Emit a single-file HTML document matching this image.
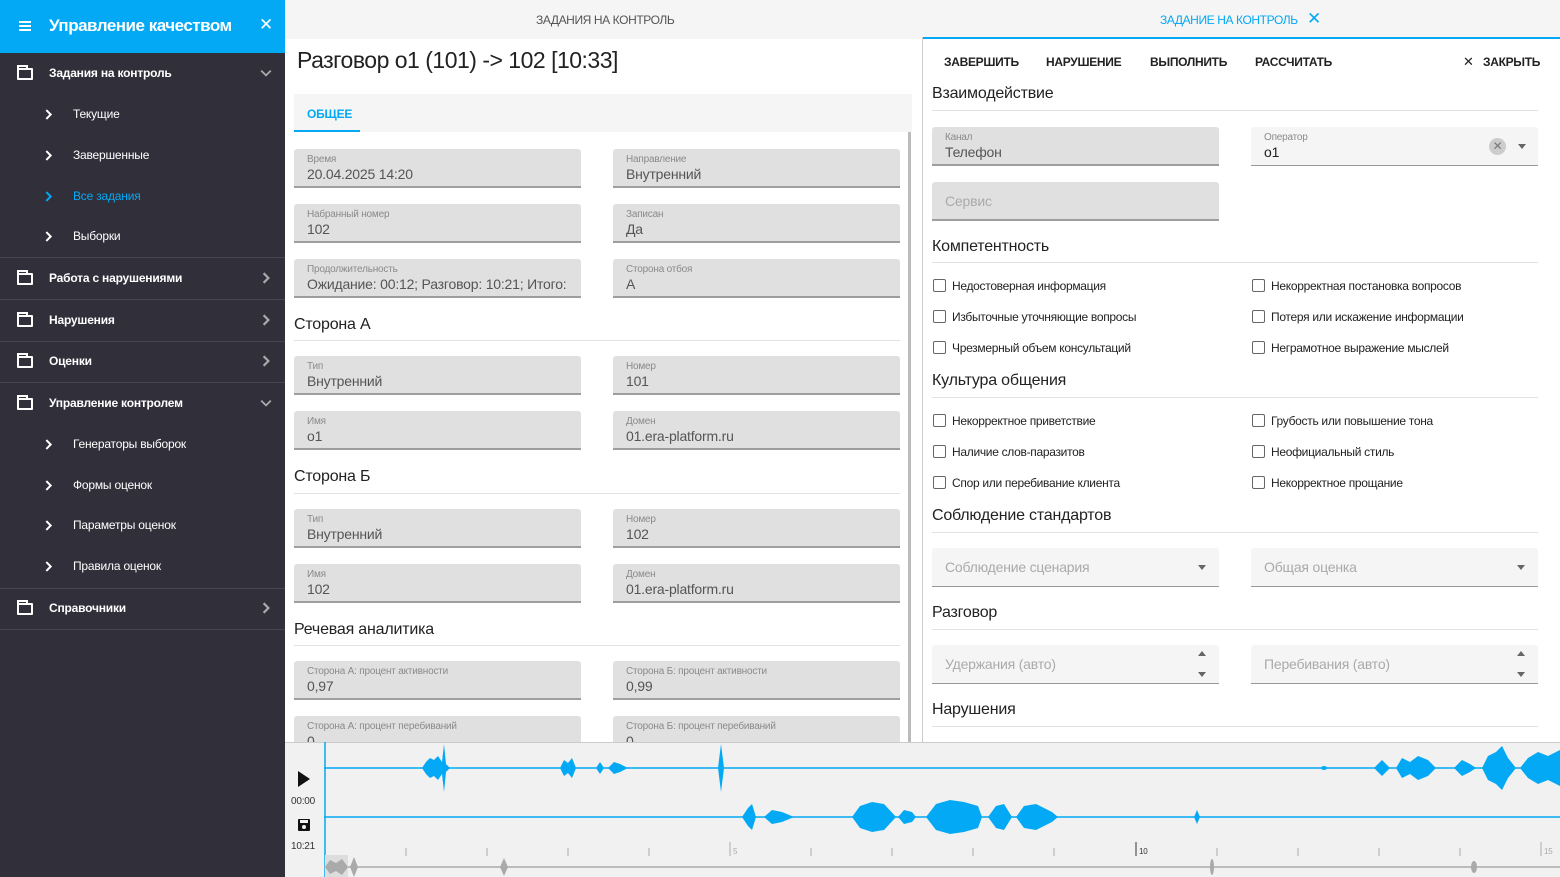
<!DOCTYPE html>
<html><head><meta charset="utf-8"><style>
*{box-sizing:border-box;margin:0;padding:0}
body{width:1560px;height:877px;position:relative;overflow:hidden;font-family:"Liberation Sans","Noto Sans CJK SC",sans-serif;background:#fff;color:#222;letter-spacing:-0.2px}
.a{position:absolute}
#sb{left:0;top:0;width:285px;height:877px;background:#302f3a}
#hd{left:0;top:0;width:285px;height:53px;background:#03a9f4;color:#fff}
.it{position:absolute;left:0;width:285px;color:#fff;font-size:12px;font-weight:bold;line-height:16px}
.sub{position:absolute;left:73px;color:#fff;font-size:12px}
.sep{position:absolute;left:0;width:285px;height:1px;background:#45444f}
.fold{position:absolute;left:17px;width:16px;height:12px;border:2px solid #fff;border-radius:1px}
.fold:before{content:"";position:absolute;left:-2px;top:-5px;width:7px;height:3px;border:2px solid #fff;border-bottom:none}
.ch{position:absolute}
.f{position:absolute;background:#e0e0e0;border-bottom:2px solid #9e9e9e;border-radius:3px 3px 0 0;height:39px}
.f .l{position:absolute;left:13px;top:5px;font-size:10px;color:#8a8a8a}
.f .v{position:absolute;left:13px;top:17px;font-size:14px;color:#555;white-space:nowrap;overflow:hidden;right:10px}
.f.w{background:#f5f5f5;border-bottom:1px solid #999}
.f.w .v{color:#222}
.ph{position:absolute;left:13px;top:11px;font-size:14px;color:#aaa}
.h{position:absolute;font-size:16px;color:#222}
.ln{position:absolute;height:1px;background:#e3e3e3}
.cb{position:absolute;font-size:12px;color:#222;padding-left:19px;line-height:14px;letter-spacing:-0.3px}
.cb:before{content:"";position:absolute;left:0;top:0;width:11px;height:11px;border:1.5px solid #666;border-radius:2px}
.btn{position:absolute;top:55px;font-size:12px;font-weight:bold;color:#222;letter-spacing:-0.3px}
.arr{position:absolute;width:0;height:0;border-left:4px solid transparent;border-right:4px solid transparent;border-top:5px solid #666}
.arru{position:absolute;width:0;height:0;border-left:4px solid transparent;border-right:4px solid transparent;border-bottom:5px solid #666}
</style></head><body>
<svg width="0" height="0" style="position:absolute"><defs>
<symbol id="r" viewBox="0 0 10 10"><path d="M3 1 L7 5 L3 9" fill="none" stroke-width="1.8"/></symbol>
<symbol id="d" viewBox="0 0 10 10"><path d="M1 3 L5 7 L9 3" fill="none" stroke-width="1.5"/></symbol>
</defs></svg>
<div id="sb" class="a"></div>
<div id="hd" class="a">
 <div class="a" style="left:19px;top:21px;width:12px;height:2px;background:#fff;box-shadow:0 4px #fff,0 8px #fff"></div>
 <div class="a" style="left:49px;top:16px;font-size:17px;font-weight:bold;letter-spacing:-0.5px">Управление качеством</div>
 <div class="a" style="left:259px;top:15px;font-size:17px">✕</div>
</div>
<div class="fold" style="top:68px"></div><div class="it" style="top:65px;left:49px">Задания на контроль</div><svg class="ch" style="left:260px;top:67px" width="12" height="12" stroke="#aaa"><use href="#d"/></svg>
<svg class="ch" style="left:43px;top:109px" width="11" height="11" stroke="#fff"><use href="#r"/></svg><div class="sub" style="top:107px">Текущие</div>
<svg class="ch" style="left:43px;top:150px" width="11" height="11" stroke="#fff"><use href="#r"/></svg><div class="sub" style="top:148px">Завершенные</div>
<svg class="ch" style="left:43px;top:191px" width="11" height="11" stroke="#03a9f4"><use href="#r"/></svg><div class="sub" style="top:189px;color:#03a9f4">Все задания</div>
<svg class="ch" style="left:43px;top:231px" width="11" height="11" stroke="#fff"><use href="#r"/></svg><div class="sub" style="top:229px">Выборки</div>
<div class="sep" style="top:257px"></div>
<div class="fold" style="top:273px"></div><div class="it" style="top:270px;left:49px">Работа с нарушениями</div><svg class="ch" style="left:260px;top:272px" width="12" height="12" stroke="#aaa"><use href="#r"/></svg>
<div class="sep" style="top:299px"></div>
<div class="fold" style="top:315px"></div><div class="it" style="top:312px;left:49px">Нарушения</div><svg class="ch" style="left:260px;top:314px" width="12" height="12" stroke="#aaa"><use href="#r"/></svg>
<div class="sep" style="top:341px"></div>
<div class="fold" style="top:356px"></div><div class="it" style="top:353px;left:49px">Оценки</div><svg class="ch" style="left:260px;top:355px" width="12" height="12" stroke="#aaa"><use href="#r"/></svg>
<div class="sep" style="top:382px"></div>
<div class="fold" style="top:398px"></div><div class="it" style="top:395px;left:49px">Управление контролем</div><svg class="ch" style="left:260px;top:397px" width="12" height="12" stroke="#aaa"><use href="#d"/></svg>
<svg class="ch" style="left:43px;top:439px" width="11" height="11" stroke="#fff"><use href="#r"/></svg><div class="sub" style="top:437px">Генераторы выборок</div>
<svg class="ch" style="left:43px;top:480px" width="11" height="11" stroke="#fff"><use href="#r"/></svg><div class="sub" style="top:478px">Формы оценок</div>
<svg class="ch" style="left:43px;top:520px" width="11" height="11" stroke="#fff"><use href="#r"/></svg><div class="sub" style="top:518px">Параметры оценок</div>
<svg class="ch" style="left:43px;top:561px" width="11" height="11" stroke="#fff"><use href="#r"/></svg><div class="sub" style="top:559px">Правила оценок</div>
<div class="sep" style="top:588px"></div>
<div class="fold" style="top:603px"></div><div class="it" style="top:600px;left:49px">Справочники</div><svg class="ch" style="left:260px;top:602px" width="12" height="12" stroke="#aaa"><use href="#r"/></svg>
<div class="sep" style="top:629px"></div>

<div class="a" style="left:285px;top:0;width:1275px;height:39px;background:#f5f5f5"></div>
<div class="a" style="left:536px;top:13px;font-size:12px;color:#555;letter-spacing:-0.4px">ЗАДАНИЯ НА КОНТРОЛЬ</div>
<div class="a" style="left:1160px;top:13px;font-size:12px;color:#03a9f4;letter-spacing:-0.4px">ЗАДАНИЕ НА КОНТРОЛЬ</div>
<div class="a" style="left:1307px;top:9px;font-size:17px;color:#03a9f4">✕</div>
<div class="a" style="left:922px;top:37px;width:638px;height:2px;background:#03a9f4"></div>
<div class="a" style="left:922px;top:37px;width:1px;height:705px;background:#ccc"></div>

<div class="a" style="left:297px;top:47px;font-size:23px;color:#222;letter-spacing:-0.5px">Разговор o1 (101) -&gt; 102 [10:33]</div>
<div class="a" style="left:294px;top:94px;width:618px;height:38px;background:#f5f5f5"></div>
<div class="a" style="left:307px;top:107px;font-size:12px;font-weight:bold;color:#03a9f4">ОБЩЕЕ</div>
<div class="a" style="left:294px;top:130px;width:66px;height:2px;background:#03a9f4"></div>
<div class="a" style="left:908px;top:132px;width:3px;height:610px;background:#bbb"></div>

<div class="f" style="left:294px;top:149px;width:287px"><div class="l">Время</div><div class="v">20.04.2025 14:20</div></div>
<div class="f" style="left:613px;top:149px;width:287px"><div class="l">Направление</div><div class="v">Внутренний</div></div>
<div class="f" style="left:294px;top:204px;width:287px"><div class="l">Набранный номер</div><div class="v">102</div></div>
<div class="f" style="left:613px;top:204px;width:287px"><div class="l">Записан</div><div class="v">Да</div></div>
<div class="f" style="left:294px;top:259px;width:287px"><div class="l">Продолжительность</div><div class="v">Ожидание: 00:12; Разговор: 10:21; Итого: 10:33</div></div>
<div class="f" style="left:613px;top:259px;width:287px"><div class="l">Сторона отбоя</div><div class="v">A</div></div>
<div class="h" style="left:294px;top:316px">Сторона А</div><div class="ln" style="left:294px;top:340px;width:606px"></div>
<div class="f" style="left:294px;top:356px;width:287px"><div class="l">Тип</div><div class="v">Внутренний</div></div>
<div class="f" style="left:613px;top:356px;width:287px"><div class="l">Номер</div><div class="v">101</div></div>
<div class="f" style="left:294px;top:411px;width:287px"><div class="l">Имя</div><div class="v">o1</div></div>
<div class="f" style="left:613px;top:411px;width:287px"><div class="l">Домен</div><div class="v">01.era-platform.ru</div></div>
<div class="h" style="left:294px;top:468px">Сторона Б</div><div class="ln" style="left:294px;top:493px;width:606px"></div>
<div class="f" style="left:294px;top:509px;width:287px"><div class="l">Тип</div><div class="v">Внутренний</div></div>
<div class="f" style="left:613px;top:509px;width:287px"><div class="l">Номер</div><div class="v">102</div></div>
<div class="f" style="left:294px;top:564px;width:287px"><div class="l">Имя</div><div class="v">102</div></div>
<div class="f" style="left:613px;top:564px;width:287px"><div class="l">Домен</div><div class="v">01.era-platform.ru</div></div>
<div class="h" style="left:294px;top:621px">Речевая аналитика</div><div class="ln" style="left:294px;top:645px;width:606px"></div>
<div class="f" style="left:294px;top:661px;width:287px"><div class="l">Сторона А: процент активности</div><div class="v">0,97</div></div>
<div class="f" style="left:613px;top:661px;width:287px"><div class="l">Сторона Б: процент активности</div><div class="v">0,99</div></div>
<div class="f" style="left:294px;top:716px;width:287px;height:26px;border:none;overflow:hidden"><div class="l">Сторона А: процент перебиваний</div><div class="v">0</div></div>
<div class="f" style="left:613px;top:716px;width:287px;height:26px;border:none;overflow:hidden"><div class="l">Сторона Б: процент перебиваний</div><div class="v">0</div></div>

<div class="btn" style="left:944px">ЗАВЕРШИТЬ</div>
<div class="btn" style="left:1046px">НАРУШЕНИЕ</div>
<div class="btn" style="left:1150px">ВЫПОЛНИТЬ</div>
<div class="btn" style="left:1255px">РАССЧИТАТЬ</div>
<div class="btn" style="left:1463px;font-weight:normal;top:54px;font-size:13px">✕</div>
<div class="btn" style="left:1483px">ЗАКРЫТЬ</div>
<div class="h" style="left:932px;top:85px">Взаимодействие</div><div class="ln" style="left:932px;top:110px;width:606px"></div>
<div class="f" style="left:932px;top:127px;width:287px"><div class="l">Канал</div><div class="v">Телефон</div></div>
<div class="f w" style="left:1251px;top:127px;width:287px"><div class="l">Оператор</div><div class="v">o1</div>
 <div class="a" style="left:238px;top:11px;width:17px;height:17px;border-radius:50%;background:#ccc;color:#777;font-size:12px;text-align:center;line-height:17px">✕</div>
 <div class="arr" style="left:267px;top:17px"></div></div>
<div class="f" style="left:932px;top:182px;width:287px"><div class="ph">Сервис</div></div>
<div class="h" style="left:932px;top:238px">Компетентность</div><div class="ln" style="left:932px;top:262px;width:606px"></div>
<div class="cb" style="left:933px;top:279px">Недостоверная информация</div>
<div class="cb" style="left:933px;top:310px">Избыточные уточняющие вопросы</div>
<div class="cb" style="left:933px;top:341px">Чрезмерный объем консультаций</div>
<div class="cb" style="left:1252px;top:279px">Некорректная постановка вопросов</div>
<div class="cb" style="left:1252px;top:310px">Потеря или искажение информации</div>
<div class="cb" style="left:1252px;top:341px">Неграмотное выражение мыслей</div>
<div class="h" style="left:932px;top:372px">Культура общения</div><div class="ln" style="left:932px;top:397px;width:606px"></div>
<div class="cb" style="left:933px;top:414px">Некорректное приветствие</div>
<div class="cb" style="left:933px;top:445px">Наличие слов-паразитов</div>
<div class="cb" style="left:933px;top:476px">Спор или перебивание клиента</div>
<div class="cb" style="left:1252px;top:414px">Грубость или повышение тона</div>
<div class="cb" style="left:1252px;top:445px">Неофициальный стиль</div>
<div class="cb" style="left:1252px;top:476px">Некорректное прощание</div>
<div class="h" style="left:932px;top:507px">Соблюдение стандартов</div><div class="ln" style="left:932px;top:532px;width:606px"></div>
<div class="f w" style="left:932px;top:548px;width:287px"><div class="ph">Соблюдение сценария</div><div class="arr" style="left:266px;top:17px"></div></div>
<div class="f w" style="left:1251px;top:548px;width:287px"><div class="ph">Общая оценка</div><div class="arr" style="left:266px;top:17px"></div></div>
<div class="h" style="left:932px;top:604px">Разговор</div><div class="ln" style="left:932px;top:629px;width:606px"></div>
<div class="f w" style="left:932px;top:645px;width:287px"><div class="ph">Удержания (авто)</div><div class="arru" style="left:266px;top:6px"></div><div class="arr" style="left:266px;top:27px"></div></div>
<div class="f w" style="left:1251px;top:645px;width:287px"><div class="ph">Перебивания (авто)</div><div class="arru" style="left:266px;top:6px"></div><div class="arr" style="left:266px;top:27px"></div></div>
<div class="h" style="left:932px;top:701px">Нарушения</div><div class="ln" style="left:932px;top:726px;width:606px"></div>

<div class="a" style="left:285px;top:742px;width:1275px;height:135px;background:#f1f1f1;border-top:1px solid #ccc"></div>
<div class="a" style="left:298px;top:771px;width:0;height:0;border-top:8px solid transparent;border-bottom:8px solid transparent;border-left:12px solid #111"></div>
<div class="a" style="left:291px;top:796px;font-size:10px;color:#333">00:00</div>
<div class="a" style="left:298px;top:819px;width:12px;height:12px;background:#111;border-radius:1px"><div class="a" style="left:2px;top:1px;width:8px;height:3px;background:#f1f1f1"></div><div class="a" style="left:4px;top:6px;width:4px;height:4px;background:#f1f1f1;border-radius:50%"></div></div>
<div class="a" style="left:291px;top:841px;font-size:10px;color:#333">10:21</div>
<svg class="a" style="left:324px;top:742px" width="1236" height="135">
<line x1="1" y1="0" x2="1" y2="135" stroke="#03a9f4" stroke-width="1.5"/>
<line x1="0" y1="26" x2="1236" y2="26" stroke="#03a9f4" stroke-width="1.5"/>
<line x1="0" y1="75" x2="1236" y2="75" stroke="#03a9f4" stroke-width="1.5"/>
<g fill="#03a9f4">
<path d="M98 26 L102 20 L106 16 L110 18 L114 14 L118 20 L120 2 L122 22 L126 26 L122 30 L120 50 L118 32 L114 38 L110 34 L106 36 L102 32 Z"/>
<path d="M236 26 L240 18 L244 21 L248 16 L252 26 L248 36 L244 31 L240 34 Z"/>
<path d="M272 26 L276 20 L280 26 L276 32 Z"/><path d="M284 26 L290 20 L296 22 L304 26 L296 30 L290 32 Z"/>
<path d="M394 26 L397 2 L400 26 L397 50 Z"/>
<path d="M1050 26 L1058 18 L1066 26 L1058 34 Z"/>
<path d="M1072 26 L1078 16 L1086 20 L1094 14 L1104 18 L1112 26 L1104 34 L1094 38 L1086 32 L1078 36 Z"/>
<path d="M1130 26 L1138 18 L1146 22 L1152 26 L1146 30 L1138 34 Z"/>
<path d="M1158 26 L1164 14 L1172 10 L1178 4 L1184 16 L1192 26 L1184 36 L1178 48 L1172 42 L1164 38 Z"/>
<path d="M1196 26 L1204 16 L1214 10 L1224 14 L1236 8 L1236 44 L1224 38 L1214 42 L1204 36 Z"/>
<ellipse cx="1000" cy="26" rx="3" ry="2"/>
<path d="M418 75 L424 66 L428 62 L432 75 L428 88 L424 84 Z"/>
<path d="M440 75 L448 68 L458 70 L470 75 L458 80 L448 82 Z"/>
<path d="M528 75 L536 64 L548 60 L560 62 L572 75 L560 88 L548 90 L536 86 Z"/>
<path d="M574 75 L580 68 L588 70 L592 75 L588 80 L580 82 Z"/>
<path d="M602 75 L612 62 L626 58 L640 60 L654 64 L658 75 L654 86 L640 90 L626 92 L612 88 Z"/>
<path d="M664 75 L672 64 L680 62 L688 75 L680 88 L672 86 Z"/>
<path d="M692 75 L700 64 L712 62 L728 70 L734 75 L728 80 L712 88 L700 86 Z"/>
<path d="M870 75 L873 68 L876 75 L873 82 Z"/>
</g>
<g stroke="#aaa" stroke-width="1">
<line x1="82" y1="106" x2="82" y2="114"/><line x1="163" y1="106" x2="163" y2="114"/><line x1="244" y1="106" x2="244" y2="114"/><line x1="325" y1="106" x2="325" y2="114"/><line x1="406" y1="100" x2="406" y2="114"/><line x1="487" y1="106" x2="487" y2="114"/><line x1="568" y1="106" x2="568" y2="114"/><line x1="649" y1="106" x2="649" y2="114"/><line x1="730" y1="106" x2="730" y2="114"/><line x1="812" y1="100" x2="812" y2="114" stroke="#333"/><line x1="893" y1="106" x2="893" y2="114"/><line x1="974" y1="106" x2="974" y2="114"/><line x1="1055" y1="106" x2="1055" y2="114"/><line x1="1136" y1="106" x2="1136" y2="114"/><line x1="1217" y1="100" x2="1217" y2="114"/>
<line x1="0" y1="125" x2="1236" y2="125" stroke-width="1.5"/>
</g>
<text x="409" y="112" font-size="8" fill="#aaa" font-family="Liberation Sans">5</text>
<text x="815" y="112" font-size="8" fill="#333" font-family="Liberation Sans">10</text>
<text x="1220" y="112" font-size="8" fill="#aaa" font-family="Liberation Sans">15</text>
<rect x="1" y="113" width="23" height="22" fill="#ddd"/>
<g fill="#aaa"><path d="M1 125 L6 118 L12 121 L18 117 L24 125 L18 133 L12 129 L6 132 Z"/><path d="M26 125 L30 115 L34 125 L30 135 Z"/><path d="M176 125 L180 116 L184 125 L180 134 Z"/><ellipse cx="888" cy="125" rx="2" ry="8"/><ellipse cx="1150" cy="125" rx="3" ry="6"/></g>
</svg>
</body></html>
